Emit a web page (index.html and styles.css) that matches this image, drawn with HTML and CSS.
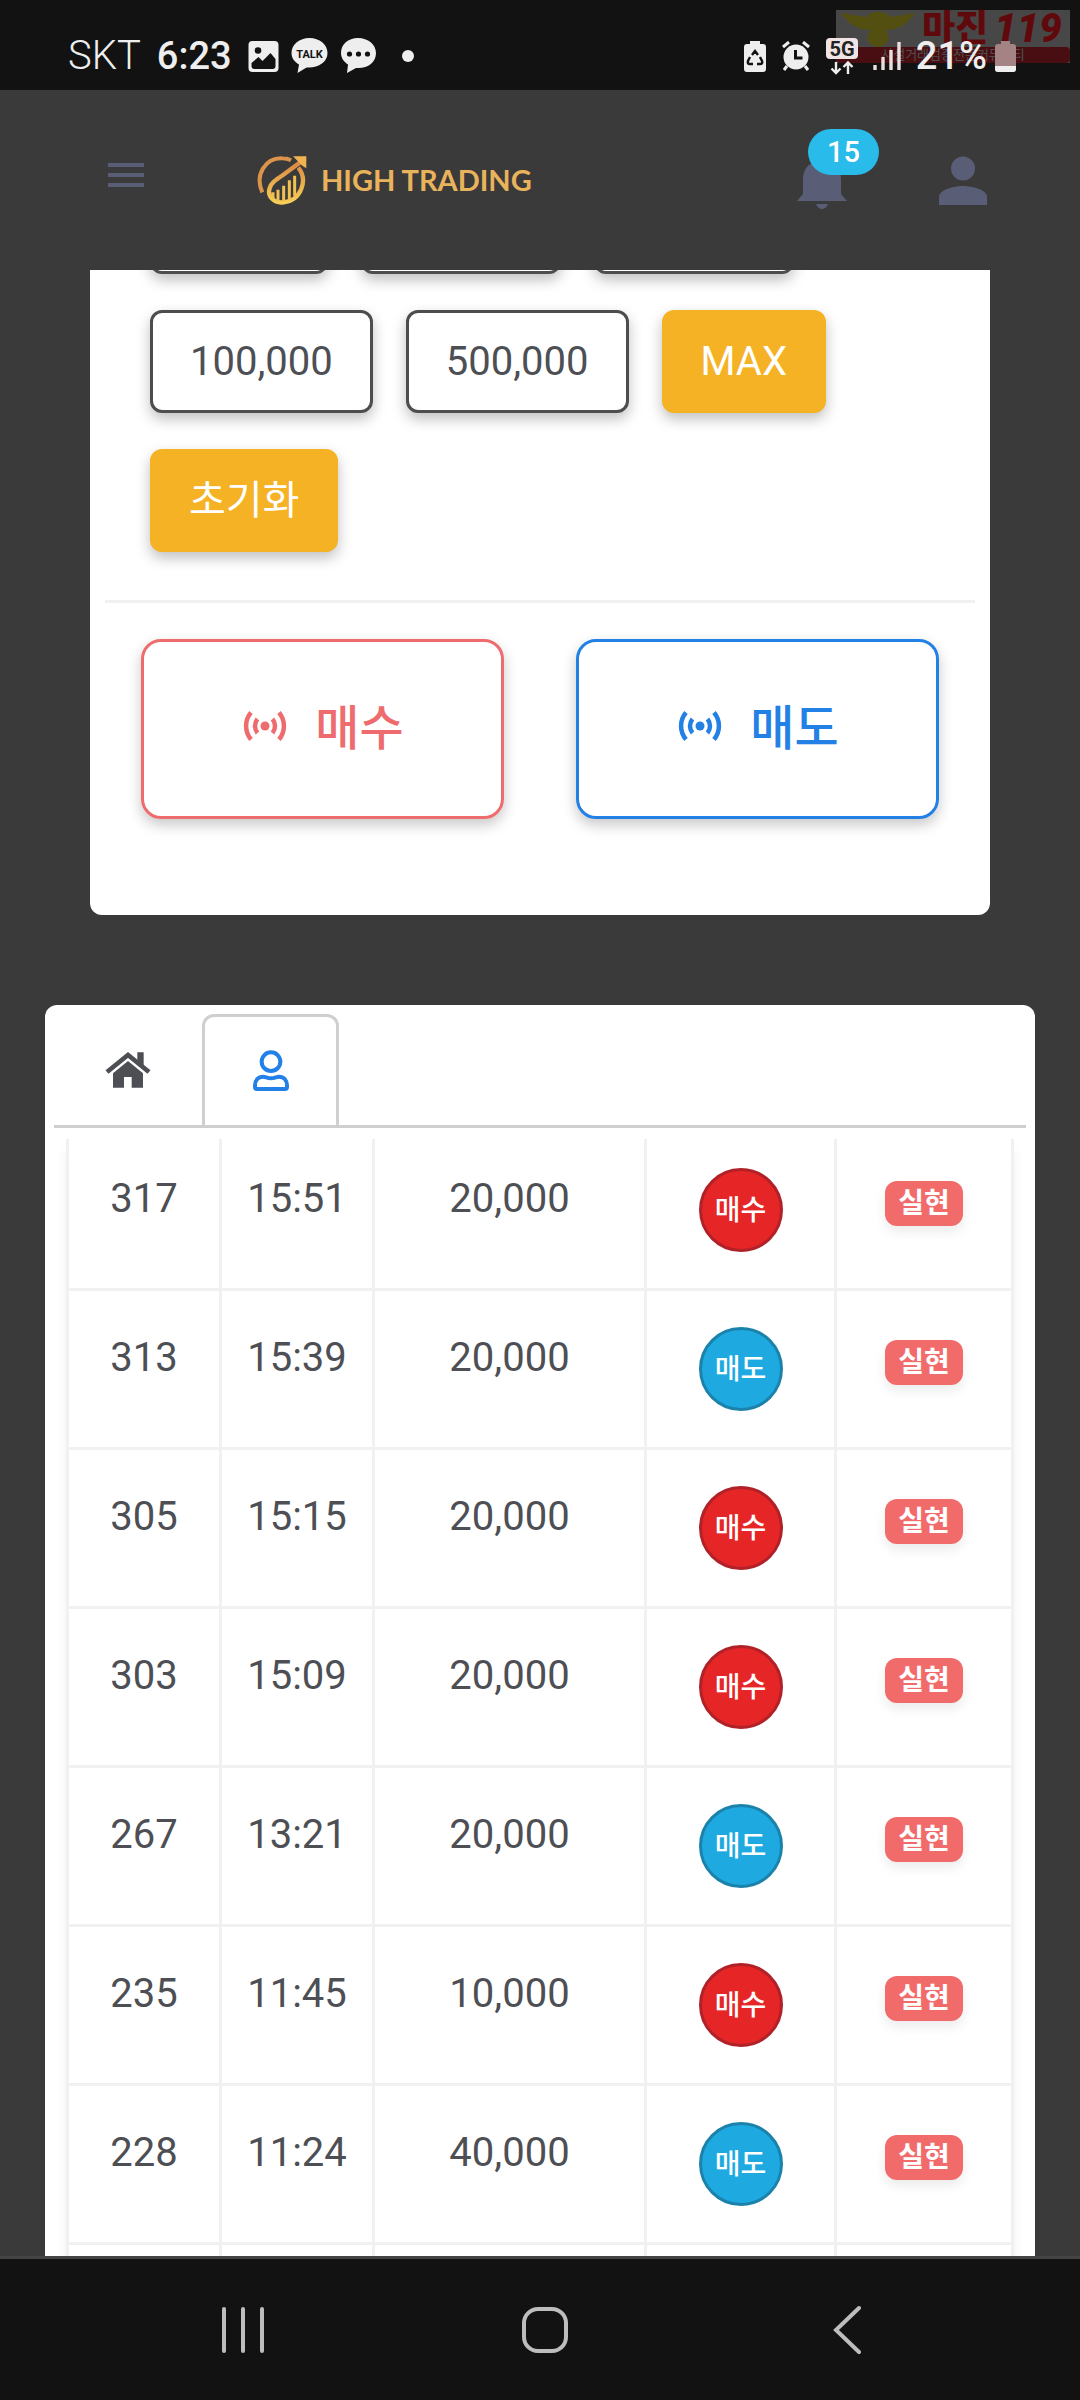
FILE: index.html
```html
<!DOCTYPE html>
<html lang="ko">
<head>
<meta charset="utf-8">
<meta name="viewport" content="width=device-width, initial-scale=1">
<title>HIGH TRADING</title>
<link rel="stylesheet" href="styles.css">
</head>
<body>
<svg width="0" height="0" class="defs" aria-hidden="true">
  <symbol id="broadcast" viewBox="0 0 48 36">
    <circle cx="24" cy="18" r="4.500" fill="currentColor"/>
    <path d="M16.500 11a11 11 0 0 0 0 14M31.500 11a11 11 0 0 1 0 14M10 4.500a21 21 0 0 0 0 27M38 4.500a21 21 0 0 1 0 27" fill="none" stroke="currentColor" stroke-width="4.500"/>
  </symbol>
</svg>
<div class="shell">
  <div class="status">
    <div class="stamp">
      <div class="stamp-top">
        <svg width="76" height="36" viewBox="0 0 76 36" fill="#a39a10"><path d="M0 2l26 4q3-5 12-5t12 5l26-4-7 7-5 5-9 4-9 1q6 10-2 15-6 4-12 0-8-5-2-15l-9-1-9-4-5-5z"/></svg>
        <span>마진</span><i>119</i>
      </div>
      <div class="stamp-strip">사설거래검증전문커뮤니티</div>
    </div>
    <div class="status-left">
      <span class="carrier">SKT</span>
      <span class="clock">6:23</span>
      <div class="notices">
        <svg width="31" height="31" viewBox="0 0 30 31"><rect width="30" height="31" rx="4" fill="#eee"/><circle cx="9.500" cy="9.500" r="3.300" fill="#121212"/><path d="M3 22l7-6 4 4 8-8 5 6v7q0 3-3 3H6q-3 0-3-3z" fill="#121212"/></svg>
        <svg width="37" height="36" viewBox="0 0 36 36"><path d="M18 0C8 0 0 6.500 0 15c0 5 3 9 7.500 11.500L6 35l9-5.500c11 1 21-5 21-14.500C36 6.500 28 0 18 0z" fill="#eee"/><text x="18" y="20" class="talk">TALK</text></svg>
        <svg width="36" height="36" viewBox="0 0 36 36"><path d="M18 0C8 0 1 6.500 1 15c0 5 3 9 7 11.500L7 35l9-5c11 1 20-5 20-15C36 6.500 28 0 18 0z" fill="#eee"/><g fill="#121212"><circle cx="9.500" cy="16" r="2.600"/><circle cx="18.500" cy="16" r="2.600"/><circle cx="27.500" cy="16" r="2.600"/></g></svg>
      </div>
      <span class="dot"></span>
    </div>
    <div class="status-right">
      <svg width="22" height="31" viewBox="0 0 22 31"><path d="M6 0h10v3h3q3 0 3 3v22q0 3-3 3H3q-3 0-3-3V6q0-3 3-3h3z" fill="#eee"/><path d="M8 14l3-4 3 4M16 16l2 4q1 3-2 3h-3M9 23H6q-3 0-2-3l2-4" fill="none" stroke="#121212" stroke-width="2.400"/></svg>
      <svg width="30" height="30" viewBox="0 0 30 30"><circle cx="15" cy="16" r="12.500" fill="#eee"/><path d="M2 6l6-5M28 6l-6-5M6 25l-3 4M24 25l3 4" stroke="#eee" stroke-width="3"/><path d="M14.500 9v8h7" fill="none" stroke="#121212" stroke-width="3"/></svg>
      <svg width="32" height="37" viewBox="0 0 32 37"><rect width="32" height="21" rx="4" fill="#f0e4e4"/><text x="16" y="18" class="fiveg">5G</text><path d="M10 24v11M5.500 30.500L10 35l4.500-4.500M22 36V25M17.500 29l4.500-4.500 4.500 4.500" fill="none" stroke="#eee" stroke-width="2.400"/></svg>
      <svg width="28" height="28" viewBox="0 0 28 28"><path d="M2 23v5M10 15v13M18 8v20M26 0v28" stroke="#ecdede" stroke-width="3.400"/></svg>
      <div class="battery">
        <span class="clock">21%</span>
        <svg width="21" height="31" viewBox="0 0 21 31"><path d="M6 0h9v3h3q3 0 3 3v22q0 3-3 3H3q-3 0-3-3V6q0-3 3-3h3z" fill="#a58284"/><path d="M0 25h21v3q0 3-3 3H3q-3 0-3-3z" fill="#eee"/></svg>
      </div>
    </div>
  </div>

  <header class="topbar">
    <button class="icon-btn" aria-label="메뉴"><svg width="36" height="24" viewBox="0 0 36 24"><path d="M0 2h36M0 12h36M0 22h36" stroke="currentColor" stroke-width="4"/></svg></button>
    <a class="brand" href="#">
      <svg width="50" height="50" viewBox="0 0 150 150" fill="none">
        <defs><linearGradient id="gold" x1="0" y1="0" x2="0" y2="1"><stop offset="0" stop-color="#d98845"/><stop offset="1" stop-color="#f7ce56"/></linearGradient></defs>
        <path d="M16 112C-8 58 26 8 76 10q14 0 26 6" stroke="#dc944a" stroke-width="12"/>
        <path d="M124 38c30 38 8 98-44 104-30 4-50-20-42-42 4-16 16-24 40-40l54-40" stroke="url(#gold)" stroke-width="13"/>
        <path d="M108 4h40v36l-12-8-12-12z" fill="#efb451"/>
        <path d="M48 112v20M63 104v34M80 92v48M97 76v60M113 62v60" stroke="#f2c053" stroke-width="9"/>
      </svg>
      <span>HIGH TRADING</span>
    </a>
    <button class="icon-btn bell" aria-label="알림">
      <svg width="50" height="52" viewBox="0 0 50 52" fill="currentColor"><path d="M25 0c-3 0-5 2-5 4C11 6 6 13 6 22v15l-6 7h50l-6-7V22c0-9-5-16-14-18 0-2-2-4-5-4zM19 47h12q-2 5-6 5t-6-5z"/></svg>
      <span class="count">15</span>
    </button>
    <button class="icon-btn" aria-label="내 정보"><svg width="48" height="49" viewBox="0 0 48 49" fill="currentColor"><circle cx="24" cy="12.500" r="12"/><path d="M0 49V41c0-7 14-11 24-11s24 4 24 11v8z"/></svg></button>
  </header>

  <main class="content">
    <section class="card order">
      <div class="chips">
        <button class="chip">5,000</button>
        <button class="chip">10,000</button>
        <button class="chip">50,000</button>
        <button class="chip">100,000</button>
        <button class="chip">500,000</button>
        <button class="chip solid">MAX</button>
        <button class="chip solid">초기화</button>
      </div>
      <div class="trades">
        <button class="trade buy"><svg width="48" height="36"><use href="#broadcast"/></svg>매수</button>
        <button class="trade sell"><svg width="48" height="36"><use href="#broadcast"/></svg>매도</button>
      </div>
    </section>

    <section class="card history">
      <nav class="tabs">
        <a class="tab" href="#" aria-label="전체">
          <svg width="48" height="40" viewBox="0 0 144 120"><path d="M9 66L72 15l63 51" fill="none" stroke="currentColor" stroke-width="14"/><path d="M100 7h19v42L100 34zM72 33l45 37v43H83V81H60v32H27V70z" fill="currentColor"/></svg>
        </a>
        <a class="tab active" href="#" aria-label="내 거래">
          <svg width="36" height="42" viewBox="0 0 108 126" fill="none" stroke="currentColor" stroke-width="12"><circle cx="54" cy="35" r="28"/><path d="M30 80c8 0 12 5 24 5s16-5 24-5c14 0 24 10 24 26v5q0 6-6 6H12q-6 0-6-6v-5c0-16 10-26 24-26z"/></svg>
        </a>
      </nav>
      <div class="table-wrap">
        <table>
          <colgroup><col class="c1"><col class="c2"><col class="c3"><col class="c4"><col class="c5"></colgroup>
          <tbody>
            <tr><td>317</td><td>15:51</td><td>20,000</td><td><span class="side buy">매수</span></td><td><span class="state">실현</span></td></tr>
            <tr><td>313</td><td>15:39</td><td>20,000</td><td><span class="side sell">매도</span></td><td><span class="state">실현</span></td></tr>
            <tr><td>305</td><td>15:15</td><td>20,000</td><td><span class="side buy">매수</span></td><td><span class="state">실현</span></td></tr>
            <tr><td>303</td><td>15:09</td><td>20,000</td><td><span class="side buy">매수</span></td><td><span class="state">실현</span></td></tr>
            <tr><td>267</td><td>13:21</td><td>20,000</td><td><span class="side sell">매도</span></td><td><span class="state">실현</span></td></tr>
            <tr><td>235</td><td>11:45</td><td>10,000</td><td><span class="side buy">매수</span></td><td><span class="state">실현</span></td></tr>
            <tr><td>228</td><td>11:24</td><td>40,000</td><td><span class="side sell">매도</span></td><td><span class="state">실현</span></td></tr>
            <tr><td></td><td></td><td></td><td></td><td></td></tr>
          </tbody>
        </table>
      </div>
    </section>
  </main>

  <nav class="softkeys">
    <button aria-label="최근 앱"><svg width="44" height="48" viewBox="0 0 44 48"><path d="M3 3v42M22 3v42M41 3v42" stroke="currentColor" stroke-width="4" stroke-linecap="round"/></svg></button>
    <button aria-label="홈"><svg width="48" height="48" viewBox="0 0 48 48"><rect x="3" y="3" width="42" height="42" rx="14" fill="none" stroke="currentColor" stroke-width="4"/></svg></button>
    <button aria-label="뒤로"><svg width="28" height="50" viewBox="0 0 28 50"><path d="M26 3L3 25l23 22" fill="none" stroke="currentColor" stroke-width="4" stroke-linecap="round"/></svg></button>
  </nav>
</div>
</body>
</html>
```
FILE: styles.css
```css
* { box-sizing: border-box; }

body {
  margin: 0;
  background: #3a3a3a;
  color: #4d4f54;
  font: 40px/56px Roboto, "Noto Sans CJK KR", sans-serif;
}

button {
  margin: 0;
  padding: 0;
  border: 0;
  background: none;
  color: inherit;
  font: inherit;
}

a { color: inherit; text-decoration: none; }
svg { display: block; flex: none; }
.defs { position: absolute; }

.shell {
  display: flex;
  flex-direction: column;
  height: 100vh;
}

/* Device status bar */
.status {
  position: relative;
  display: flex;
  flex: none;
  justify-content: space-between;
  height: 90px;
  padding: 22px 64px 0 68px;
  background: #121212;
  color: #eee;
}

.status-left, .status-right, .notices, .battery {
  position: relative;
  display: flex;
  align-items: center;
  height: 68px;
}

.status-left { gap: 16px; }
.notices { gap: 12px; }
.status-right { gap: 15px; }
.battery { gap: 8px; }
.carrier { font-weight: 300; }
.clock { font-size: 38px; font-weight: 500; }

.dot {
  width: 12px;
  height: 12px;
  margin-left: 10px;
  border-radius: 50%;
  background: #eee;
}

.talk {
  fill: #121212;
  font: 700 11px Roboto, sans-serif;
  text-anchor: middle;
}

.fiveg {
  fill: #222;
  font: 700 20px Roboto, sans-serif;
  text-anchor: middle;
}

.stamp {
  position: absolute;
  top: 10px;
  right: 10px;
  width: 234px;
  background: #888;
  opacity: 0.45;
}

.stamp-top {
  display: flex;
  height: 37px;
  align-items: center;
  gap: 6px;
  padding-left: 4px;
  color: #c00008;
  font-size: 36px;
  font-weight: 900;
}

.stamp-top i { font-size: 40px; }

.stamp-strip {
  height: 16px;
  border-radius: 4px;
  background: #8c0a10;
  color: #999;
  font-size: 13px;
  line-height: 16px;
  text-align: center;
}

/* Site header */
.topbar {
  display: flex;
  flex: none;
  align-items: center;
  height: 180px;
  padding: 0 93px 0 108px;
}

.icon-btn { position: relative; color: #5a5d76; }

.topbar > .icon-btn:first-child { margin-bottom: 10px; }

.brand {
  display: flex;
  align-items: center;
  gap: 14px;
  margin: 0 auto 0 113px;
  color: #e9b35c;
  font: 700 29px/40px "Lato", sans-serif;
}

.bell { margin-right: 92px; }
.bell svg { margin-top: 6px; }

.count {
  position: absolute;
  top: -22px;
  left: 11px;
  width: 71px;
  border-radius: 23px;
  background: #29bbe9;
  color: #fff;
  font-size: 29px;
  font-weight: 500;
  line-height: 46px;
}

/* Scrolling page content */
.content {
  flex: 1;
  min-height: 0;
  overflow: hidden;
}

.card { border-radius: 12px; background: #fff; }

.order {
  margin: -160px 90px 0;
  padding: 61px 15px 96px;
}

.chips {
  display: flex;
  flex-wrap: wrap;
  gap: 36px 33px;
  padding: 0 45px 48px;
  border-bottom: 3px solid #f0f0f1;
}

.chip {
  padding: 20px 37px;
  border: 3px solid #4d4d50;
  border-radius: 12px;
  background: #fff;
  box-shadow: 0 6px 14px rgba(0, 0, 0, 0.25);
  line-height: 57px;
}

.chip.solid {
  padding: 20px 36px;
  border-color: #f5b225;
  background: #f5b225;
  color: #fff;
}

.trades {
  display: grid;
  grid-template-columns: 1fr 1fr;
  gap: 72px;
  padding: 36px 36px 0;
}

.trade {
  display: flex;
  align-items: center;
  justify-content: center;
  gap: 26px;
  height: 180px;
  border: 3px solid;
  border-radius: 20px;
  box-shadow: 0 6px 14px rgba(0, 0, 0, 0.22);
  font-size: 48px;
  font-weight: 500;
}

.trade svg { margin-bottom: 6px; }
.trade.buy { color: #ee6c6e; }
.trade.sell { color: #2380e4; }

.history {
  margin: 90px 45px 0;
  padding: 9px 9px 0;
}

.tabs {
  display: flex;
  border-bottom: 3px solid #cfcfcf;
}

.tab {
  display: flex;
  align-items: center;
  justify-content: center;
  width: 148px;
  height: 111px;
}

.tab.active {
  width: 137px;
  border: 3px solid #cfcfcf;
  border-bottom: 0;
  border-radius: 12px 12px 0 0;
  color: #2380e8;
}

.table-wrap {
  margin: 11px 12px 0;
  overflow: hidden;
  border-left: 3px solid #f1f1f2;
  box-shadow: 0 12px 12px rgba(0, 0, 0, 0.06);
}

table {
  width: 100%;
  margin-top: -7px;
  border-spacing: 0;
  table-layout: fixed;
}

.c1, .c2 { width: 153px; }
.c3 { width: 272px; }
.c4 { width: 190px; }

td {
  height: 159px;
  padding: 36px 0 0;
  border-right: 3px solid #f1f1f2;
  border-bottom: 3px solid #f1f1f2;
  line-height: 62px;
  text-align: center;
  vertical-align: top;
}

.side, .state { display: block; margin: 0 auto; color: #fff; }

.side {
  width: 84px;
  height: 84px;
  border: 3px solid;
  border-radius: 50%;
  font-size: 28px;
  font-weight: 500;
  line-height: 80px;
}

.side.buy { border-color: #b02228; background: #e62527; }
.side.sell { border-color: #1b83ab; background: #1eaae0; }

.state {
  width: 78px;
  margin-top: 13px;
  border-radius: 12px;
  background: #f26b6b;
  box-shadow: 0 6px 12px rgba(0, 0, 0, 0.08);
  font-size: 28px;
  font-weight: 700;
  line-height: 45px;
}

/* Device navigation keys */
.softkeys {
  display: grid;
  flex: none;
  grid-template-columns: repeat(3, 1fr);
  height: 144px;
  padding: 0 82px 0 92px;
  border-top: 3px solid #444;
  background: #121212;
  color: #bdbdbd;
}

.softkeys button {
  display: flex;
  align-items: center;
  justify-content: center;
}
```
